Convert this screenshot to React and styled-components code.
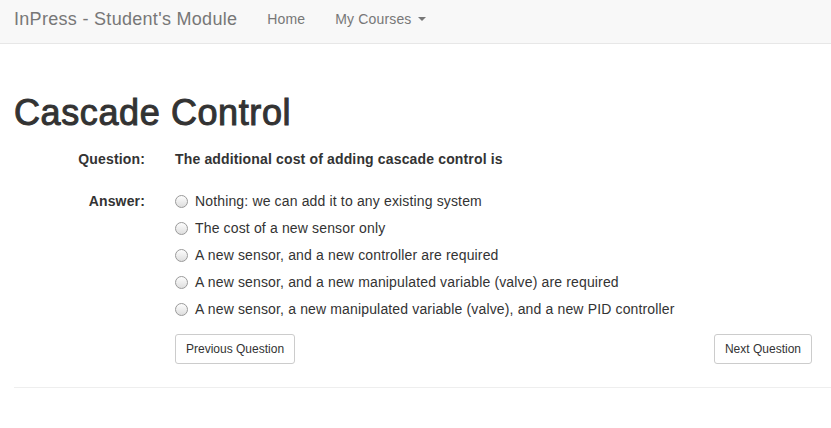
import React, { useState } from "react";
import styled, { createGlobalStyle } from "styled-components";

const GlobalStyle = createGlobalStyle`
  body {
    margin: 0;
    font-family: "Liberation Sans", Arial, sans-serif;
    font-size: 14px;
    line-height: 20px;
    color: #333333;
    background: #ffffff;
    overflow: hidden;
  }
`;

const NAVBAR = styled.nav`
  display: flex;
  align-items: center;
  height: 43px;
  box-sizing: content-box;
  background-color: #f8f8f8;
  border-bottom: 1px solid #e7e7e7;
  padding-left: 14px;
  & > * {
    margin-top: -6px;
  }
`;

const BRAND = styled.a`
  font-size: 18px;
  letter-spacing: 0.3px;
  color: #777777;
  text-decoration: none;
  margin-right: 15px;
`;

const NAVLINK = styled.a`
  display: flex;
  align-items: center;
  gap: 7px;
  font-size: 14px;
  letter-spacing: 0.15px;
  color: #777777;
  text-decoration: none;
  padding: 0 15px;
`;

const CARET = styled.span`
  width: 0;
  height: 0;
  border-left: 4px solid transparent;
  border-right: 4px solid transparent;
  border-top: 4px solid #777777;
  margin-top: 1px;
`;

const CONTAINER = styled.div`
  padding-left: 14px;
`;

const H1 = styled.h1`
  font-size: 36px;
  font-weight: 500;
  line-height: 40px;
  letter-spacing: 0.6px;
  -webkit-text-stroke: 1px #333333;
  margin: 49px 0 16px;
  color: #333333;
`;

const FORM = styled.form`
  display: grid;
  grid-template-columns: 131px 1fr;
  column-gap: 30px;
  row-gap: 22px;
  margin-right: 19px;
  letter-spacing: 0.15px;
`;

const LABEL = styled.label`
  font-weight: bold;
  text-align: right;
`;

const QUESTION = styled.div`
  font-weight: bold;
`;

const OPTIONS = styled.div`
  display: flex;
  flex-direction: column;
  gap: 7px;
`;

const OPTION = styled.label`
  display: flex;
  align-items: center;
  gap: 7px;
  cursor: pointer;
`;

const RADIO = styled.input`
  appearance: none;
  box-sizing: border-box;
  margin: 0;
  width: 13px;
  height: 13px;
  border-radius: 50%;
  border: 1px solid #9a9a9a;
  background: linear-gradient(#fdfdfd, #dedede);
  cursor: pointer;
  &:checked {
    background: radial-gradient(circle, #333 0 2.5px, #fff 3px);
  }
`;

const BUTTONS = styled.div`
  display: flex;
  justify-content: space-between;
  margin-top: -7px;
  letter-spacing: 0;
`;

const BUTTON = styled.button`
  font-family: inherit;
  font-size: 12px;
  line-height: 18px;
  padding: 5px 10px;
  color: #333333;
  background-color: #ffffff;
  border: 1px solid #cccccc;
  border-radius: 3px;
  cursor: pointer;
`;

const HR = styled.hr`
  border: 0;
  border-top: 1px solid #eeeeee;
  margin: 23px 0 0;
`;

const answers = [
  "Nothing: we can add it to any existing system",
  "The cost of a new sensor only",
  "A new sensor, and a new controller are required",
  "A new sensor, and a new manipulated variable (valve) are required",
  "A new sensor, a new manipulated variable (valve), and a new PID controller",
];

const App = () => {
  const [choice, setChoice] = useState(null);

  return (
    <>
      <GlobalStyle />
      <NAVBAR>
        <BRAND href="#">InPress - Student's Module</BRAND>
        <NAVLINK href="#">Home</NAVLINK>
        <NAVLINK href="#">
          My Courses <CARET />
        </NAVLINK>
      </NAVBAR>
      <CONTAINER>
        <H1>Cascade Control</H1>
        <FORM onSubmit={(e) => e.preventDefault()}>
          <LABEL>Question:</LABEL>
          <QUESTION>The additional cost of adding cascade control is</QUESTION>
          <LABEL>Answer:</LABEL>
          <OPTIONS>
            {answers.map((a, i) => (
              <OPTION key={i}>
                <RADIO
                  type="radio"
                  name="answer"
                  checked={choice === i}
                  onChange={() => setChoice(i)}
                />
                {a}
              </OPTION>
            ))}
          </OPTIONS>
          <div />
          <BUTTONS>
            <BUTTON type="button">Previous Question</BUTTON>
            <BUTTON type="button">Next Question</BUTTON>
          </BUTTONS>
        </FORM>
        <HR />
      </CONTAINER>
    </>
  );
};

export default App;
